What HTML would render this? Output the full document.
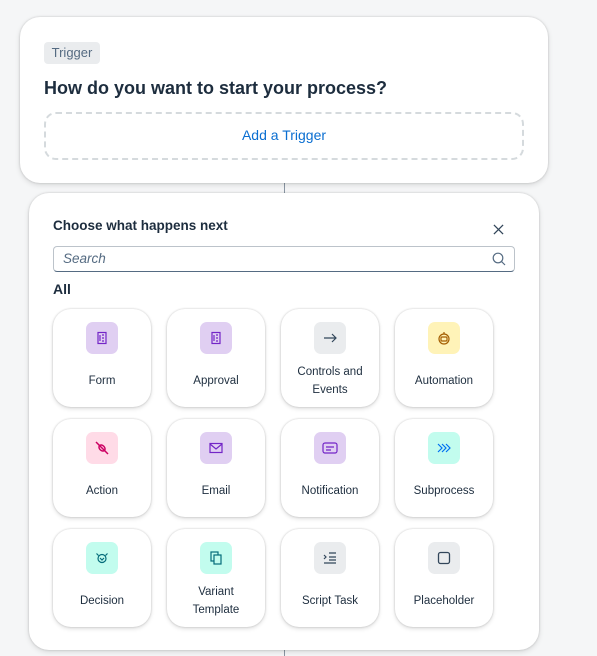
<!DOCTYPE html>
<html><head><style>
body{margin:0;width:597px;height:656px;background:#f5f6f7;font-family:"Liberation Sans",sans-serif;position:relative;overflow:hidden;color:#1d2d3e}
.card{position:absolute;background:#fff;border-radius:20px;box-shadow:0 0 2px rgba(0,0,0,.18),0 2px 6px rgba(0,0,0,.12)}
.line{position:absolute;left:284px;width:1px;background:#8a96a3}
.tile{position:absolute;width:98px;height:98px;background:#fff;border-radius:18px;box-shadow:0 0 2px rgba(0,0,0,.2),0 2px 4px rgba(0,0,0,.12);text-align:center;font-size:11.5px;color:#1d2d3e}
.ic{position:absolute;left:33px;top:13px;width:32px;height:32px;border-radius:7px;display:flex;align-items:center;justify-content:center}
.lb{position:absolute;left:0;right:0;top:57px;height:30px;display:flex;align-items:center;justify-content:center;line-height:18px}
</style></head><body>
<div class="line" style="top:183px;height:10px"></div>
<div class="line" style="top:650px;height:6px"></div>
<div class="card" style="left:20px;top:17px;width:528px;height:166px">
  <div style="position:absolute;left:24px;top:25px;width:56px;height:22px;background:#eaecee;border-radius:4px;color:#556b82;font-size:13px;line-height:22px;text-align:center">Trigger</div>
  <div style="position:absolute;left:24px;top:61px;font-size:18px;font-weight:bold;color:#1d2d3e">How do you want to start your process?</div>
  <div style="position:absolute;left:24px;top:95px;width:476px;height:44px;border:2px dashed #d5dadd;border-radius:12px;color:#0a6ed1;font-size:14px;line-height:43px;text-align:center">Add a Trigger</div>
</div>
<div class="card" style="left:29px;top:193px;width:510px;height:457px">
  <div style="position:absolute;left:24px;top:25px;font-size:13.5px;font-weight:bold">Choose what happens next</div>
  <svg style="position:absolute;left:464px;top:31px" width="11" height="11" viewBox="0 0 12 12"><path d="M1 1L11 11M11 1L1 11" stroke="#32465a" stroke-width="1.4"/></svg>
  <div style="position:absolute;left:24px;top:53px;width:460px;height:24px;border:1px solid #bcc3ca;border-bottom:1px solid #556b82;border-radius:4px">
    <span style="position:absolute;left:9px;top:4px;font-size:13.5px;font-style:italic;color:#556b82">Search</span>
    <svg style="position:absolute;right:8px;top:5px" width="14" height="14" viewBox="0 0 14 14"><circle cx="6" cy="6" r="4.8" fill="none" stroke="#556b82" stroke-width="1.2"/><path d="M9.5 9.5L13 13" stroke="#556b82" stroke-width="1.2"/></svg>
  </div>
  <div style="position:absolute;left:24px;top:88px;font-size:14px;font-weight:bold">All</div>
</div>

<div class="tile" style="left:53px;top:309px"><div class="ic" style="background:#e0cff2"><svg width="14" height="14" viewBox="0 0 14 14" fill="none" stroke="#7325c7" stroke-width="1.2"><rect x="3" y="1.5" width="8" height="11"/><path d="M5 4v6M7 4h2M7 7h2M7 10h2"/></svg></div><div class="lb">Form</div></div>
<div class="tile" style="left:167px;top:309px"><div class="ic" style="background:#e0cff2"><svg width="14" height="14" viewBox="0 0 14 14" fill="none" stroke="#7325c7" stroke-width="1.2"><rect x="3" y="1.5" width="8" height="11"/><path d="M5 4v6M7 4h2M7 7h2M7 10h2"/></svg></div><div class="lb">Approval</div></div>
<div class="tile" style="left:281px;top:309px"><div class="ic" style="background:#eaecee"><svg width="14" height="14" viewBox="0 0 14 14" fill="none" stroke="#32465a" stroke-width="1.2"><path d="M1 7h12M9 3l4 4-4 4"/></svg></div><div class="lb">Controls and<br>Events</div></div>
<div class="tile" style="left:395px;top:309px"><div class="ic" style="background:#fff3b8"><svg width="14" height="14" viewBox="0 0 14 14" fill="none" stroke="#a45d00" stroke-width="1.2"><circle cx="7" cy="8" r="5"/><rect x="4" y="6" width="6" height="4" rx="1"/><path d="M7 1v2"/></svg></div><div class="lb">Automation</div></div>

<div class="tile" style="left:53px;top:419px"><div class="ic" style="background:#ffdbe7"><svg width="16" height="16" viewBox="0 0 16 16" fill="none" stroke="#cc0063" stroke-width="1.5"><path d="M2 2L14 14"/><ellipse cx="8" cy="8" rx="2.5" ry="3.5" transform="rotate(-45 8 8)"/></svg></div><div class="lb">Action</div></div>
<div class="tile" style="left:167px;top:419px"><div class="ic" style="background:#e0cff2"><svg width="14" height="12" viewBox="0 0 14 12" fill="none" stroke="#7325c7" stroke-width="1.2"><rect x="1" y="1.5" width="12" height="9"/><path d="M1 2l6 5 6-5"/></svg></div><div class="lb">Email</div></div>
<div class="tile" style="left:281px;top:419px"><div class="ic" style="background:#e0cff2"><svg width="16" height="12" viewBox="0 0 16 12" fill="none" stroke="#7325c7" stroke-width="1.2"><rect x="1" y="1" width="14" height="10" rx="2"/><path d="M4 5h8M4 8h5"/></svg></div><div class="lb">Notification</div></div>
<div class="tile" style="left:395px;top:419px"><div class="ic" style="background:#c2fcee"><svg width="14" height="10" viewBox="0 0 14 10" fill="none" stroke="#0070f2" stroke-width="1.2"><path d="M1 1l4 4-4 4M5 1l4 4-4 4M9 1l4 4-4 4"/></svg></div><div class="lb">Subprocess</div></div>

<div class="tile" style="left:53px;top:529px"><div class="ic" style="background:#c2fcee"><svg width="14" height="14" viewBox="0 0 14 14" fill="none" stroke="#046c7a" stroke-width="1.2"><circle cx="7" cy="7.5" r="4"/><path d="M1.5 2.5l2 2M12.5 2.5l-2 2M5 7l2 2 2-2"/></svg></div><div class="lb">Decision</div></div>
<div class="tile" style="left:167px;top:529px"><div class="ic" style="background:#c2fcee"><svg width="14" height="14" viewBox="0 0 14 14" fill="none" stroke="#046c7a" stroke-width="1.2"><rect x="2" y="1" width="7" height="9"/><rect x="5" y="4" width="7" height="9" fill="#c2fcee"/></svg></div><div class="lb">Variant<br>Template</div></div>
<div class="tile" style="left:281px;top:529px"><div class="ic" style="background:#eaecee"><svg width="14" height="12" viewBox="0 0 14 12" fill="none" stroke="#32465a" stroke-width="1.2"><path d="M1 3l2 2-2 2M6 1h7M6 5h7M6 8h7M1 11h12"/></svg></div><div class="lb">Script Task</div></div>
<div class="tile" style="left:395px;top:529px"><div class="ic" style="background:#eaecee"><svg width="14" height="14" viewBox="0 0 14 14" fill="none" stroke="#32465a" stroke-width="1.3"><rect x="1.5" y="1.5" width="11" height="11" rx="2"/></svg></div><div class="lb">Placeholder</div></div>
</body></html>
